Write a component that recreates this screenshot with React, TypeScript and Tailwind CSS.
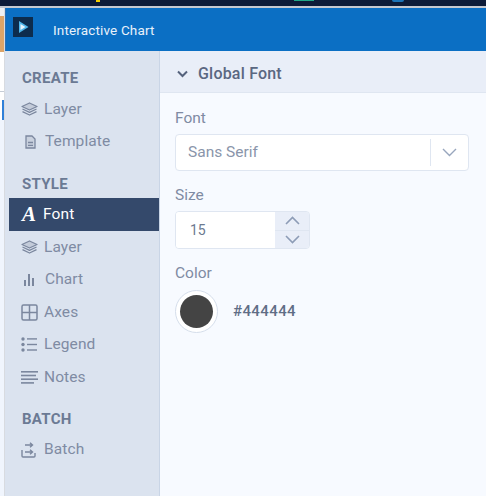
import React from "react";

const L = "#7b879e";

function LayersIcon() {
  return (
    <svg width="17" height="14" viewBox="0 0 17 14" fill="none" stroke={L} strokeWidth="1.3" strokeLinejoin="round">
      <path d="M8.5 1 L16 4.5 L8.5 8 L1 4.5 Z" fill="#c3cbd9" />
      <path d="M1.5 7 L8.5 10.3 L15.5 7" />
      <path d="M1.5 9.6 L8.5 13 L15.5 9.6" />
    </svg>
  );
}
function TemplateIcon() {
  return (
    <svg width="11" height="14" viewBox="0 0 11 14" fill="none" stroke={L} strokeWidth="1.3">
      <path d="M1 1 H7 L10 4 V13 H1 Z" fill="#c9d1de" />
      <path d="M3 7.5 H8 M3 10.3 H8" />
    </svg>
  );
}
function ChartIcon() {
  return (
    <svg width="10" height="12" viewBox="0 0 10 12" fill={L}>
      <rect x="0" y="6" width="2" height="6" />
      <rect x="4" y="0" width="2" height="12" />
      <rect x="8" y="4" width="2" height="8" />
    </svg>
  );
}
function AxesIcon() {
  return (
    <svg width="17" height="17" viewBox="0 0 17 17" fill="none" stroke={L} strokeWidth="1.5">
      <rect x="1" y="1" width="15" height="15" rx="1.5" />
      <path d="M8.5 1 V16 M1 8.5 H16" />
    </svg>
  );
}
function LegendIcon() {
  return (
    <svg width="16" height="15" viewBox="0 0 16 15" fill={L} stroke="none">
      <circle cx="2" cy="2" r="1.7" />
      <circle cx="2" cy="7.5" r="1.7" />
      <circle cx="2" cy="13" r="1.7" />
      <rect x="6" y="1.2" width="10" height="1.4" />
      <rect x="6" y="6.8" width="10" height="1.4" />
      <rect x="6" y="12.3" width="10" height="1.4" />
    </svg>
  );
}
function NotesIcon() {
  return (
    <svg width="17" height="13" viewBox="0 0 17 13" fill={L}>
      <rect x="0" y="0" width="17" height="1.6" />
      <rect x="0" y="3.7" width="15" height="1.6" />
      <rect x="0" y="7.4" width="17" height="1.6" />
      <rect x="0" y="11.1" width="13" height="1.6" />
    </svg>
  );
}
function BatchIcon() {
  return (
    <svg width="15" height="17" viewBox="0 0 15 17" fill="none" stroke={L} strokeWidth="1.4">
      <path d="M1 9 V15 Q1 16 2 16 H13 Q14 16 14 15 V12" />
      <path d="M4 4 H11 M9 1.8 L11.5 4 L9 6.2" />
      <path d="M4 11 H11 M9 8.8 L11.5 11 L9 13.2" />
    </svg>
  );
}

function Head({ children, className = "" }: { children: React.ReactNode; className?: string }) {
  return <div className={`pl-[17px] text-[15px] leading-[20px] font-bold tracking-[0.3px] text-[#6b7a94] ${className}`}>{children}</div>;
}

function Item({ icon, label, slot = "pl-0", labelPad = "pl-0" }: { icon: React.ReactNode; label: string; slot?: string; labelPad?: string }) {
  return (
    <div className="h-[32.5px] flex items-center pl-[16px] text-[15.5px] text-[#7f8ba3] tracking-[0.1px]">
      <span className={`w-[23px] flex items-center ${slot}`}>{icon}</span>
      <span className={labelPad}>{label}</span>
    </div>
  );
}

export default function App() {
  return (
    <div className="w-[486px] h-[496px] overflow-hidden flex flex-col bg-[#f7faff] font-['Roboto',sans-serif]">
      <div className="h-[6px] bg-[#0d1b38] flex shrink-0">
        <div className="ml-[96px] w-[4px] h-[2px] bg-[#f5d000]" />
        <div className="ml-[194px] w-[20px] h-[1px] bg-[#1fa888]" />
        <div className="ml-[78px] w-[12px] h-[2px] bg-[#1a73b8] rounded-b-full" />
      </div>
      <div className="h-[2px] bg-[#c5c9d0] shrink-0" />
      <div className="flex-1 flex min-h-0">
        <div className="w-[4px] shrink-0 flex flex-col bg-white">
          <div className="h-[8px] bg-[#eef0f3]" />
          <div className="h-[36px] bg-[#dca468]" />
          <div className="h-[39px] bg-white" />
          <div className="h-[1px] bg-[#c5ccd6]" />
          <div className="h-[20px] mt-[8px] border-r-2 border-[#2f80d8]" />
          <div className="flex-1 bg-[#f0f5fd]" />
        </div>
        <div className="w-[1px] bg-[#d8dbe0] shrink-0" />
        <div className="flex-1 flex flex-col min-w-0">
          <div className="h-[43px] bg-[#0b6fc4] border-l border-[#2c6fb3] flex items-center shrink-0 pl-[7px]">
            <svg width="20" height="20" viewBox="0 0 20 20" className="-mt-[5px]">
              <rect width="20" height="20" fill="#0d2c4d" />
              <path d="M6 4 L15.5 10 L6 16 Z" fill="#4fb6ea" />
              <path d="M7.5 7 L12.5 10 L7.5 13 Z" fill="#e8f4fb" />
            </svg>
            <span className="ml-[20px] mt-[2px] text-[13.5px] text-[#e8f1fa] tracking-[0.15px]">Interactive Chart</span>
          </div>
          <div className="flex-1 flex min-h-0">
            <div className="w-[155px] shrink-0 bg-[#dbe3ef] border-r border-[#c9d5e6] pt-[17px] flex flex-col">
              <Head className="mb-[5px]">CREATE</Head>
              <Item icon={<LayersIcon />} label="Layer" />
              <Item icon={<TemplateIcon />} label="Template" slot="pl-[4px]" labelPad="pl-[1px]" />
              <Head className="mt-[16px] mb-[4px]">STYLE</Head>
              <div className="h-[33px] bg-[#34496b] ml-[4px] flex items-center pl-[13px] gap-[7px] text-[15.5px] text-white tracking-[0.1px]">
                <span className="font-['Liberation_Serif',serif] font-bold italic text-[21px] leading-none">A</span>
                <span>Font</span>
              </div>
              <Item icon={<LayersIcon />} label="Layer" />
              <Item icon={<ChartIcon />} label="Chart" slot="pl-[3px]" labelPad="pl-[1px]" />
              <Item icon={<AxesIcon />} label="Axes" />
              <Item icon={<LegendIcon />} label="Legend" />
              <Item icon={<NotesIcon />} label="Notes" />
              <Head className="mt-[15px] mb-[5px]">BATCH</Head>
              <Item icon={<BatchIcon />} label="Batch" />
            </div>
            <div className="flex-1 min-w-0 flex flex-col">
              <div className="h-[42px] shrink-0 bg-[#e9eef8] border-b border-[#dfe6f1] flex items-center pl-[17px] gap-[10px] pt-[4px]">
                <svg width="11" height="8" viewBox="0 0 11 8" fill="none" stroke="#55627c" strokeWidth="2">
                  <path d="M1 1.5 L5.5 6 L10 1.5" />
                </svg>
                <span className="text-[16px] font-medium text-[#5a6781] tracking-[0.2px]">Global Font</span>
              </div>
              <div className="pl-[15px] pr-[17px] pt-[15px] flex flex-col">
                <div className="text-[15.5px] leading-[20px] text-[#7f8ba3]">Font</div>
                <div className="mt-[6px] h-[37px] bg-white border border-[#dfe6f1] rounded-[4px] flex items-center">
                  <span className="flex-1 pl-[12px] text-[15.5px] text-[#8a95aa]">Sans Serif</span>
                  <div className="w-[1px] h-[27px] bg-[#dfe6f1]" />
                  <div className="w-[37px] flex justify-center">
                    <svg width="15" height="9" viewBox="0 0 15 9" fill="none" stroke="#98a6bd" strokeWidth="1.4">
                      <path d="M1 1 L7.5 7.5 L14 1" />
                    </svg>
                  </div>
                </div>
                <div className="mt-[14px] text-[15.5px] leading-[20px] text-[#7f8ba3]">Size</div>
                <div className="mt-[6px] w-[135px] h-[38px] border border-[#dfe6f1] rounded-[4px] flex overflow-hidden">
                  <div className="w-[99px] bg-white pl-[14px] flex items-center text-[14px] text-[#6c7a90]">15</div>
                  <div className="flex-1 bg-[#e9eef8] flex flex-col">
                    <div className="flex-1 flex items-center justify-center border-b border-[#dfe6f1]">
                      <svg width="15" height="9" viewBox="0 0 15 9" fill="none" stroke="#8d9cb6" strokeWidth="1.6"><path d="M1 8 L7.5 1.5 L14 8" /></svg>
                    </div>
                    <div className="flex-1 flex items-center justify-center">
                      <svg width="15" height="9" viewBox="0 0 15 9" fill="none" stroke="#8d9cb6" strokeWidth="1.6"><path d="M1 1 L7.5 7.5 L14 1" /></svg>
                    </div>
                  </div>
                </div>
                <div className="mt-[14px] text-[15.5px] leading-[20px] text-[#7f8ba3]">Color</div>
                <div className="mt-[7px] flex items-center">
                  <div className="w-[43px] h-[43px] rounded-full bg-white border border-[#d5deeb] flex items-center justify-center">
                    <div className="w-[33px] h-[33px] rounded-full bg-[#444444]" />
                  </div>
                  <span className="ml-[15px] text-[15px] font-medium text-[#5f6d86] tracking-[0.4px]">#444444</span>
                </div>
              </div>
            </div>
          </div>
        </div>
      </div>
    </div>
  );
}
